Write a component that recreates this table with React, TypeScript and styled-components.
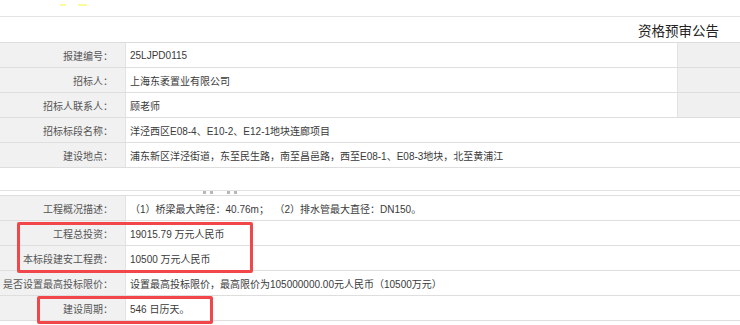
import React from 'react';
import styled, { createGlobalStyle } from 'styled-components';

const GlobalStyle = createGlobalStyle`
  html, body {
    margin: 0;
    padding: 0;
    background: #ffffff;
  }
  body {
    font-family: "Liberation Sans", "Noto Sans CJK SC", sans-serif;
    font-size: 10px;
    color: #444;
  }
`;

type Field = { label: string; value: string; aside?: boolean };

const upperRows: Field[] = [
  { label: '报建编号：', value: '25LJPD0115', aside: true },
  { label: '招标人：', value: '上海东袤置业有限公司', aside: true },
  { label: '招标人联系人：', value: '顾老师', aside: true },
  { label: '招标标段名称：', value: '洋泾西区E08-4、E10-2、E12-1地块连廊项目' },
  { label: '建设地点：', value: '浦东新区洋泾街道，东至民生路，南至昌邑路，西至E08-1、E08-3地块，北至黄浦江' },
];

const lowerRows: Field[] = [
  { label: '工程概况描述：', value: '（1）桥梁最大跨径：40.76m；  （2）排水管最大直径：DN150。' },
  { label: '工程总投资：', value: '19015.79 万元人民币' },
  { label: '本标段建安工程费：', value: '10500 万元人民币' },
  { label: '是否设置最高投标限价：', value: '设置最高投标限价，最高限价为105000000.00元人民币（10500万元）' },
  { label: '建设周期：', value: '546 日历天。' },
];

const InfoRows = ({ rows }: { rows: Field[] }) => (
  <>
    {rows.map(row => (
      <Row key={row.label} $aside={!!row.aside}>
        <Label>{row.label}</Label>
        <Value>{row.value}</Value>
        {row.aside && <Aside />}
      </Row>
    ))}
  </>
);

export default function App() {
  return (
    <Page>
      <GlobalStyle />
      <TopStrip>
        <Speck $w={6} />
        <Speck $w={9} />
      </TopStrip>
      <TitleBar>资格预审公告</TitleBar>
      <Table>
        <InfoRows rows={upperRows} />
      </Table>
      <Spacer>
        <DotPair>
          <Dot />
          <Dot />
        </DotPair>
        <DotPair>
          <Dot />
          <Dot />
        </DotPair>
      </Spacer>
      <Table>
        <InfoRows rows={lowerRows} />
        <Highlight style={{ left: 17, top: 26, width: 236, height: 51 }} />
        <Highlight style={{ left: 37, top: 100, width: 176, height: 28 }} />
      </Table>
    </Page>
  );
}

const Page = styled.div`
  width: 740px;
  height: 325px;
  overflow: hidden;
  background: #fff;
`;

const TopStrip = styled.div`
  height: 17px;
  box-sizing: border-box;
  border-bottom: 1px solid #e4e4e4;
  display: flex;
  gap: 12px;
  padding: 4px 0 0 60px;
`;

const Speck = styled.span<{ $w: number }>`
  width: ${p => p.$w}px;
  height: 2px;
  background: #fbfb9c;
`;

const TitleBar = styled.div`
  height: 26px;
  box-sizing: border-box;
  border-bottom: 1px solid #dcdcdc;
  display: flex;
  align-items: center;
  justify-content: flex-end;
  padding-right: 21px;
  font-family: "Noto Sans CJK SC", sans-serif;
  font-size: 13.5px;
  font-weight: 400;
  color: #222;
`;

const Table = styled.div`
  position: relative;
  display: flex;
  flex-direction: column;
`;

const Row = styled.div<{ $aside: boolean }>`
  display: grid;
  grid-template-columns: ${p => (p.$aside ? '126px 1fr 63px' : '126px 1fr')};
  height: 25px;
  box-sizing: border-box;
  border-bottom: 1px solid #dedede;
`;

const Label = styled.div`
  background: #f1f1f1;
  border-right: 1px solid #e2e2e2;
  display: flex;
  align-items: center;
  justify-content: flex-end;
  padding-right: 12px;
  white-space: nowrap;
  color: #555;
`;

const Value = styled.div`
  display: flex;
  align-items: center;
  padding-left: 4px;
  white-space: pre;
  overflow: hidden;
  color: #3a3a3a;
`;

const Aside = styled.div`
  background: #f0f0f0;
  border-left: 1px solid #e2e2e2;
`;

const Spacer = styled.div`
  height: 28px;
  box-sizing: border-box;
  border-bottom: 1px solid #dedede;
  background: linear-gradient(#fff 0 22px, #e2e2e2 22px 23px, #fff 23px);
  display: flex;
  align-items: flex-start;
  gap: 14px;
  padding: 23px 0 0 203px;
`;

const DotPair = styled.div`
  display: flex;
  gap: 4px;
`;

const Dot = styled.span`
  width: 3px;
  height: 3px;
  background: #b8b8b8;
`;

const Highlight = styled.div`
  position: absolute;
  box-sizing: border-box;
  border: 3px solid #f2474a;
  border-radius: 2px;
  pointer-events: none;
`;
